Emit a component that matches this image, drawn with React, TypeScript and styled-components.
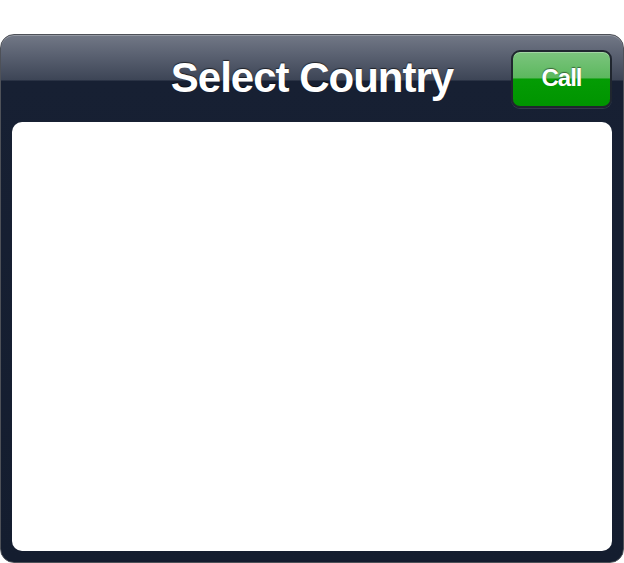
import React from "react";
import styled, { createGlobalStyle } from "styled-components";

const GlobalStyle = createGlobalStyle`
  html, body {
    margin: 0;
    padding: 0;
    background: #ffffff;
  }
  body {
    font-family: "Liberation Sans", Arial, Helvetica, sans-serif;
  }
`;

const Page = styled.div`
  width: 624px;
  height: 563px;
  padding-top: 34px;
  box-sizing: border-box;
`;

const Frame = styled.div`
  width: 624px;
  height: 529px;
  box-sizing: border-box;
  border: 1px solid #4e5158;
  border-radius: 14px;
  background: linear-gradient(
    to bottom,
    #727886 0px,
    #5a6171 20px,
    #3d4556 45px,
    #172033 46px,
    #141d2f 100%
  );
  box-shadow: inset 0 1px 0 rgba(255, 255, 255, 0.25);
  display: flex;
  flex-direction: column;
  padding: 0 11px 11px 11px;
`;

const Header = styled.div`
  height: 87px;
  flex: none;
  display: grid;
  grid-template-columns: 1fr auto 1fr;
  align-items: center;
`;

const Title = styled.h1`
  grid-column: 2;
  margin: 0;
  color: #ffffff;
  font-family: "Liberation Sans", Arial, Helvetica, sans-serif;
  font-weight: bold;
  font-size: 42px;
  letter-spacing: -1px;
  line-height: 1;
  padding-bottom: 2px;
  text-shadow: 0 -1px 1px rgba(0, 0, 0, 0.6);
  white-space: nowrap;
`;

const CallButton = styled.button`
  grid-column: 3;
  justify-self: end;
  width: 101px;
  height: 58px;
  box-sizing: border-box;
  border: 2px solid #20262f;
  border-radius: 9px;
  background: linear-gradient(
    to bottom,
    #7cc47e 0%,
    #5cb85e 48%,
    #049c04 50%,
    #009400 100%
  );
  box-shadow: 0 1px 0 rgba(255, 255, 255, 0.12), inset 0 1px 0 rgba(255, 255, 255, 0.3);
  color: #ffffff;
  font-family: "Liberation Sans", Arial, Helvetica, sans-serif;
  font-weight: bold;
  font-size: 24px;
  letter-spacing: -1px;
  text-shadow: 0 -1px 1px rgba(0, 0, 0, 0.45);
  display: flex;
  align-items: center;
  justify-content: center;
  padding: 0 0 2px 0;
  cursor: pointer;
`;

const Content = styled.div`
  flex: 1;
  background: #ffffff;
  border-radius: 10px;
`;

export default function App() {
  return (
    <>
      <GlobalStyle />
      <Page>
        <Frame>
          <Header>
            <Title>Select Country</Title>
            <CallButton>Call</CallButton>
          </Header>
          <Content />
        </Frame>
      </Page>
    </>
  );
}
